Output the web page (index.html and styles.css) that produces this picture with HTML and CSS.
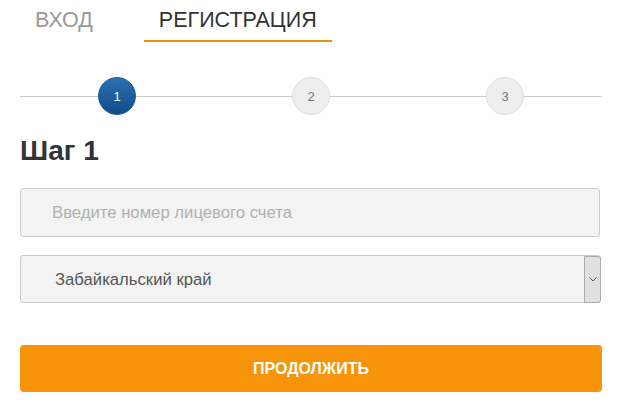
FILE: index.html
```html
<!DOCTYPE html>
<html lang="ru">
  <head>
    <meta charset="UTF-8" />
    <meta name="viewport" content="width=device-width, initial-scale=1.0" />
    <title>Регистрация</title>
    <link rel="stylesheet" href="styles.css">
  </head>
  <body>
    <div class="auth-box">
      <div class="tabs">
        <a class="tab" href="#">ВХОД</a>
        <a class="tab active" href="#">РЕГИСТРАЦИЯ</a>
      </div>

      <div class="steps">
        <div class="step"><span class="step-num current">1</span></div>
        <div class="step"><span class="step-num">2</span></div>
        <div class="step"><span class="step-num">3</span></div>
      </div>

      <h2 class="step-title">Шаг 1</h2>

      <form class="reg-form">
        <input class="field" type="text" placeholder="Введите номер лицевого счета" />
        <div class="select-wrap">
          <select class="field field-select">
            <option>Забайкальский край</option>
          </select>
          <span class="select-arrow">
            <svg width="8" height="5" viewBox="0 0 8 5"><path d="M0.5 0.5 L4 4 L7.5 0.5" fill="none" stroke="#555" stroke-width="1"/></svg>
          </span>
        </div>
        <button class="submit-btn" type="button">ПРОДОЛЖИТЬ</button>
      </form>
    </div>
  </body>
</html>
```

FILE: styles.css
```css
body {
  margin: 0;
  font-family: "Liberation Sans", Arial, sans-serif;
  background: #fff;
}

.auth-box {
  width: 582px;
  padding-left: 20px;
}

.tabs {
  display: flex;
  gap: 36px;
}

.tab {
  padding: 8px 15px 8px;
  font-size: 21.5px;
  line-height: 24px;
  color: #999;
  text-decoration: none;
  border-bottom: 2px solid transparent;
}

.tab.active {
  color: #333;
  border-bottom-color: #f39200;
}

.steps {
  display: flex;
  margin-top: 35px;
  background: linear-gradient(#ccc, #ccc) center / 100% 1px no-repeat;
}

.step {
  flex: 1;
  display: flex;
  justify-content: center;
}

.step-num {
  width: 36px;
  height: 36px;
  border: 1px solid #ddd;
  border-radius: 50%;
  background: #eee;
  color: #777;
  font-size: 13px;
  display: flex;
  align-items: center;
  justify-content: center;
}

.step-num.current {
  border-color: #1a5a98;
  background: linear-gradient(#2c70b3, #104c88);
  color: #fff;
}

.step-title {
  margin: 20px 0 21px;
  font-size: 28px;
  line-height: 32px;
  font-weight: bold;
  color: #333;
}

.reg-form {
  display: flex;
  flex-direction: column;
}

.field {
  box-sizing: border-box;
  width: 580px;
  height: 49px;
  padding: 0 20px 0 31px;
  border: 1px solid #ccc;
  border-radius: 3px;
  background: #f3f3f3;
  font-family: inherit;
  font-size: 16.7px;
  color: #555;
}

.field::placeholder {
  color: #b0b0b0;
}

.select-wrap {
  position: relative;
  width: 581px;
  margin-top: 18px;
}

.field-select {
  width: 581px;
  height: 48px;
  padding-left: 34px;
  appearance: none;
  -webkit-appearance: none;
}

.select-arrow {
  position: absolute;
  top: 1px;
  right: 0;
  bottom: 0;
  width: 15px;
  border: 1px solid #aaa;
  border-radius: 0 3px 3px 0;
  background: #e0e0e0;
  display: flex;
  align-items: center;
  justify-content: center;
}

.submit-btn {
  margin-top: 42px;
  width: 582px;
  height: 47px;
  border: none;
  border-radius: 4px;
  background: #f7940a;
  color: #fff;
  font-family: inherit;
  font-size: 16px;
  font-weight: bold;
}
```
